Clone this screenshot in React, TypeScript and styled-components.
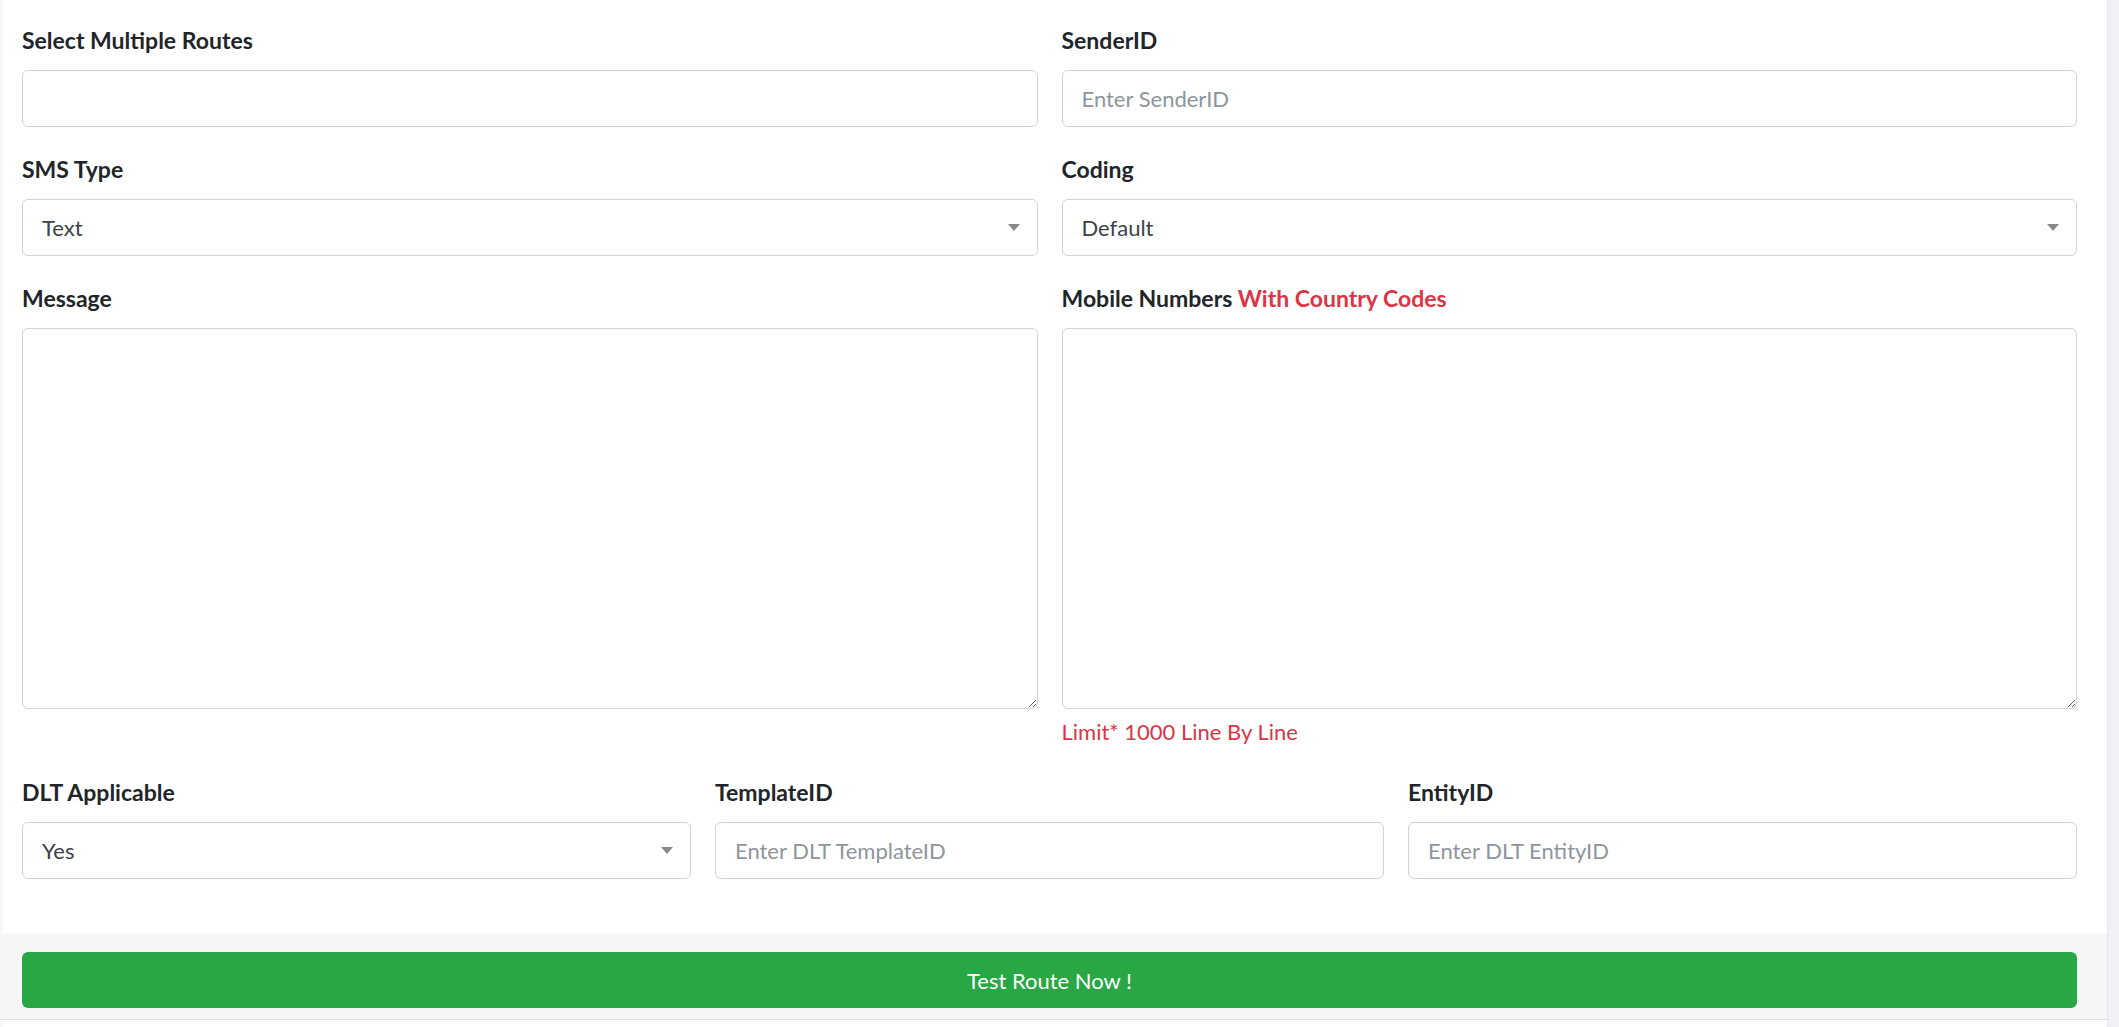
import React from 'react';
import styled, { createGlobalStyle } from 'styled-components';

export default function App() {
  return (
    <>
      <GlobalStyle />
      <Page>
        <Card>
          <CardBody>
            <Row $cols={2}>
              <FormGroup>
                <Label>Select Multiple Routes</Label>
                <MultiSelect />
              </FormGroup>
              <FormGroup>
                <Label>SenderID</Label>
                <Input placeholder="Enter SenderID" />
              </FormGroup>
            </Row>
            <Row $cols={2}>
              <FormGroup>
                <Label>SMS Type</Label>
                <SelectBox value="Text" options={['Text', 'Unicode', 'Flash']} />
              </FormGroup>
              <FormGroup>
                <Label>Coding</Label>
                <SelectBox value="Default" options={['Default', 'GSM', 'UCS2']} />
              </FormGroup>
            </Row>
            <Row $cols={2}>
              <FormGroup>
                <Label>Message</Label>
                <TextArea />
              </FormGroup>
              <FormGroup>
                <Label>
                  Mobile Numbers <Danger>With Country Codes</Danger>
                </Label>
                <TextArea />
                <HelpText>Limit* 1000 Line By Line</HelpText>
              </FormGroup>
            </Row>
            <Row $cols={3}>
              <FormGroup>
                <Label>DLT Applicable</Label>
                <SelectBox value="Yes" options={['Yes', 'No']} />
              </FormGroup>
              <FormGroup>
                <Label>TemplateID</Label>
                <Input placeholder="Enter DLT TemplateID" />
              </FormGroup>
              <FormGroup>
                <Label>EntityID</Label>
                <Input placeholder="Enter DLT EntityID" />
              </FormGroup>
            </Row>
          </CardBody>
          <CardFooter>
            <SubmitButton type="button">Test Route Now !</SubmitButton>
          </CardFooter>
        </Card>
        <SideStrip />
      </Page>
    </>
  );
}

function SelectBox({ value, options }: SelectBoxProps) {
  return (
    <SelectWrap>
      <Select defaultValue={value}>
        {options.map(o => (
          <option key={o}>{o}</option>
        ))}
      </Select>
      <Caret width="12" height="7" viewBox="0 0 12 7">
        <path d="M0 0h12L6 7z" fill="#888" />
      </Caret>
    </SelectWrap>
  );
}

interface SelectBoxProps {
  value: string;
  options: string[];
}

const GlobalStyle = createGlobalStyle`
  * {
    box-sizing: border-box;
  }
  body {
    margin: 0;
    background: #fff;
    font-family: "Source Sans Pro", Lato, "Liberation Sans", sans-serif;
    color: #212529;
  }
`;

const Page = styled.div`
  display: flex;
  min-height: 1027px;
`;

const Card = styled.div`
  flex: 1;
  display: flex;
  flex-direction: column;
  background: #fff;
  box-shadow: inset 6px 0 6px -6px rgba(0, 0, 0, 0.08);
`;

const CardBody = styled.div`
  padding: 22px 30px 31px 22px;
`;

const Row = styled.div<{ $cols: number }>`
  display: grid;
  grid-template-columns: repeat(${p => p.$cols}, 1fr);
  column-gap: 24px;
`;

const FormGroup = styled.div`
  margin-bottom: 24px;
`;

const Label = styled.label`
  display: block;
  font-size: 23px;
  line-height: 36px;
  font-weight: 700;
  color: #212529;
  margin-bottom: 12px;
`;

const Danger = styled.span`
  color: #dc3545;
`;

const fieldBase = `
  display: block;
  width: 100%;
  height: 57px;
  padding: 0 19px;
  font-family: inherit;
  font-size: 22px;
  color: #495057;
  background: #fff;
  border: 1px solid #ced4da;
  border-radius: 6px;
  outline: none;
`;

const MultiSelect = styled.div`
  ${fieldBase}
`;

const Input = styled.input`
  ${fieldBase}

  &::placeholder {
    color: #8e959c;
  }
`;

const SelectWrap = styled.div`
  position: relative;
`;

const Select = styled.select`
  ${fieldBase}
  appearance: none;
  -webkit-appearance: none;
  color: #3d4247;
`;

const Caret = styled.svg`
  position: absolute;
  right: 18px;
  top: 25px;
  pointer-events: none;
`;

const TextArea = styled.textarea`
  ${fieldBase}
  height: 381px;
  padding: 12px 19px;
  resize: vertical;
`;

const HelpText = styled.div`
  margin-top: 5px;
  font-size: 22px;
  line-height: 36px;
  color: #dc3545;
`;

const CardFooter = styled.div`
  background: #f6f6f6;
  padding: 18px 30px 11px 22px;
  border-bottom: 1px solid #dcdee2;
`;

const SubmitButton = styled.button`
  display: block;
  width: 100%;
  height: 56px;
  border: none;
  border-radius: 6px;
  background: #28a745;
  color: #fff;
  font-family: inherit;
  font-size: 22px;
  cursor: pointer;
`;

const SideStrip = styled.div`
  width: 12px;
  background: #f0f1f5;
  border-left: 1px solid #e3e4e8;
`;
